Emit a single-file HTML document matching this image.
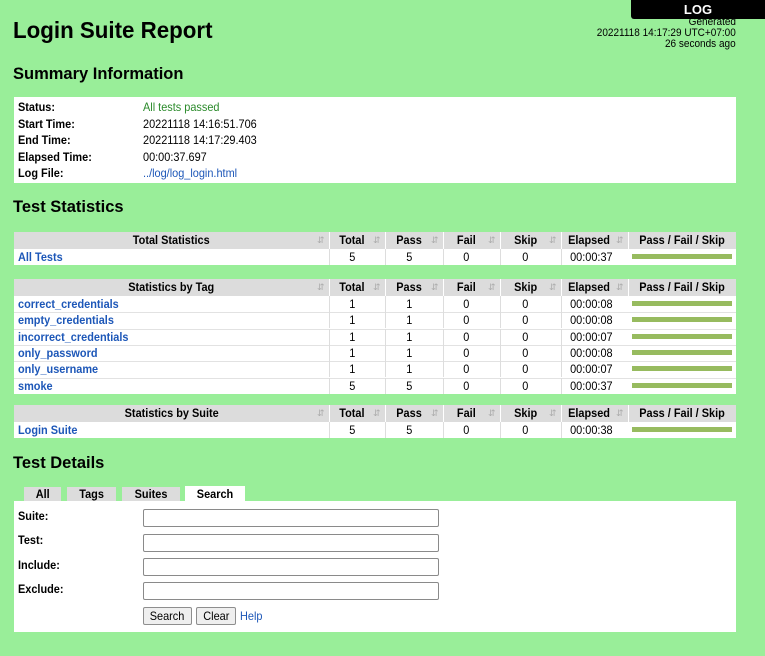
<!DOCTYPE html>
<html><head><meta charset="utf-8"><style>
*{margin:0;padding:0;box-sizing:border-box}
body{width:765px;height:656px;background:#99ee99;font-family:"Liberation Sans",Arial,sans-serif;position:relative;overflow:hidden;color:#000}
.a{position:absolute;white-space:nowrap}
.c{display:inline-block;transform:scaleX(.91);transform-origin:left center}
.h{transform:scaleX(.97)}
.r{transform-origin:right center}
.m{transform-origin:center center}
.box{position:absolute;background:#fff}
.lbl{font-size:12px;font-weight:bold}
.val{font-size:12px}
a,.lnk{color:#1d57b8;text-decoration:none}
.hd{position:absolute;background:#dcdcdc;height:17px}
.cell{position:absolute;font-size:12px;text-align:center;line-height:16px}
.bar{position:absolute;background:#97bb5f;height:7px;border:1px solid #fff}
.vl{position:absolute;width:1px;background:#ddd}
.hl{position:absolute;height:1px;background:#e2e2e2}
.inp{position:absolute;left:143px;width:296px;height:18px;border:1px solid #8a8a8a;border-radius:2px;background:#fff}
.btn{position:absolute;top:607px;height:18px;border:1px solid #8e8e8e;background:#efefef;border-radius:2px;font-size:12px;text-align:center;line-height:16px}
.tab{position:absolute;top:487px;height:14px;background:#dcdcdc;font-size:12px;font-weight:bold;text-align:center;line-height:14px}
.srt{font-size:9px;color:#aaa;position:absolute}
</style></head><body>
<div class="a" style="left:631px;top:0;width:134px;height:19px;background:#000;color:#fff;font-weight:bold;font-size:13px;text-align:center;line-height:19px;border-bottom-left-radius:3px">LOG</div>
<div class="a" style="left:13px;top:17px;font-size:23px;font-weight:bold"><span class="c h">Login Suite Report</span></div>
<div class="a" style="right:29px;top:17px;font-size:11px;text-align:right;line-height:11px"><span class="c r">Generated</span><br><span class="c r">20221118 14:17:29 UTC+07:00</span><br><span class="c r">26 seconds ago</span></div>
<div class="a" style="left:13px;top:64px;font-size:17px;font-weight:bold"><span class="c h">Summary Information</span></div>
<div class="box" style="left:14px;top:97px;width:722px;height:86px"></div>
<div class="a lbl" style="left:18px;top:99px;line-height:16.6px"><span class="c">Status:</span><br><span class="c">Start Time:</span><br><span class="c">End Time:</span><br><span class="c">Elapsed Time:</span><br><span class="c">Log File:</span></div>
<div class="a val" style="left:143px;top:99px;line-height:16.6px"><span class="c" style="color:#2a8a2a">All tests passed</span><br><span class="c">20221118 14:16:51.706</span><br><span class="c">20221118 14:17:29.403</span><br><span class="c">00:00:37.697</span><br><span class="c lnk">../log/log_login.html</span></div>
<div class="a" style="left:13px;top:197px;font-size:17px;font-weight:bold"><span class="c h">Test Statistics</span></div>

<div id="t"></div>
<script>
var cols=[[14,329],[329,385],[385,443],[443,500],[500,561],[561,628],[628,736]];
var heads=["Total","Pass","Fail","Skip","Elapsed","Pass / Fail / Skip"];
function table(top,title,rows){
 var h='';
 h+='<div class="hd" style="left:14px;top:'+top+'px;width:722px"></div>';
 h+='<div class="box" style="left:14px;top:'+(top+17)+'px;width:722px;height:'+(rows.length*16.3)+'px"></div>';
 h+='<div class="cell" style="left:14px;top:'+(top)+'px;width:315px;font-weight:bold;line-height:17px"><span class="c m">'+title+'</span></div>';
 h+='<div class="srt" style="left:317px;top:'+(top+3)+'px">&#8693;</div>';
 for(var i=0;i<6;i++){var c=cols[i+1];
  h+='<div class="cell" style="left:'+c[0]+'px;top:'+top+'px;width:'+(c[1]-c[0]-(i<5?10:0))+'px;font-weight:bold;line-height:17px"><span class="c m">'+heads[i]+'</span></div>';
  if(i<5)h+='<div class="srt" style="left:'+(c[1]-12)+'px;top:'+(top+3)+'px">&#8693;</div>';
 }
 for(var i=1;i<7;i++)h+='<div class="vl" style="left:'+cols[i][0]+'px;top:'+top+'px;height:'+(17+rows.length*16.3)+'px;background:#fff"></div>';
 rows.forEach(function(r,j){var y=top+17+j*16.3;
  if(j>0)h+='<div class="hl" style="left:14px;top:'+y+'px;width:722px"></div>';
  for(var i=1;i<6;i++)h+='<div class="vl" style="left:'+cols[i][0]+'px;top:'+y+'px;height:16px"></div>';
  h+='<div class="cell lnk" style="left:18px;top:'+y+'px;text-align:left;font-weight:bold"><span class="c">'+r[0]+'</span></div>';
  var v=[r[1],r[1],0,0,r[2]];
  for(var i=0;i<5;i++){var c=cols[i+1];h+='<div class="cell" style="left:'+c[0]+'px;top:'+y+'px;width:'+(c[1]-c[0]-(i==4?6:10))+'px"><span class="c m">'+v[i]+'</span></div>';}
  h+='<div class="bar" style="left:631px;top:'+(y+4)+'px;width:102px"></div>';
 });
 return h;
}
var s='';
s+=table(232,'Total Statistics',[['All Tests',5,'00:00:37']]);
s+=table(279,'Statistics by Tag',[['correct_credentials',1,'00:00:08'],['empty_credentials',1,'00:00:08'],['incorrect_credentials',1,'00:00:07'],['only_password',1,'00:00:08'],['only_username',1,'00:00:07'],['smoke',5,'00:00:37']]);
s+=table(405,'Statistics by Suite',[['Login Suite',5,'00:00:38']]);
document.getElementById('t').innerHTML=s;
</script>

<div class="a" style="left:13px;top:453px;font-size:17px;font-weight:bold"><span class="c h">Test Details</span></div>
<div class="tab" style="left:24px;width:37px"><span class="c m">All</span></div>
<div class="tab" style="left:67px;width:49px"><span class="c m">Tags</span></div>
<div class="tab" style="left:122px;width:58px"><span class="c m">Suites</span></div>
<div class="tab" style="left:185px;width:60px;background:#fff;top:486px;height:15px;line-height:17px"><span class="c m">Search</span></div>
<div class="box" style="left:14px;top:501px;width:722px;height:131px"></div>
<div class="a lbl" style="left:18px;top:509px"><span class="c">Suite:</span></div>
<div class="a lbl" style="left:18px;top:533px"><span class="c">Test:</span></div>
<div class="a lbl" style="left:18px;top:558px"><span class="c">Include:</span></div>
<div class="a lbl" style="left:18px;top:582px"><span class="c">Exclude:</span></div>
<div class="inp" style="top:509px"></div>
<div class="inp" style="top:534px"></div>
<div class="inp" style="top:558px"></div>
<div class="inp" style="top:582px"></div>
<div class="btn" style="left:143px;width:49px"><span class="c m">Search</span></div>
<div class="btn" style="left:196px;width:40px"><span class="c m">Clear</span></div>
<div class="a lnk" style="left:240px;top:609px;font-size:12px"><span class="c">Help</span></div>
</body></html>
